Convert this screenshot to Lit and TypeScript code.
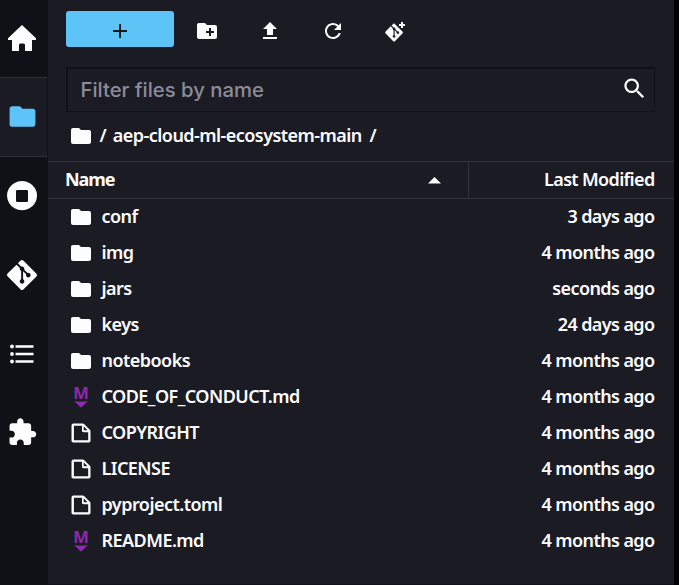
import { LitElement, html, css, svg } from "lit";
import { customElement } from "lit/decorators.js";
import { classMap } from "lit/directives/class-map.js";

const gitPath =
  "M23.546 10.93L13.067.452c-.604-.603-1.582-.603-2.188 0L8.708 2.627l2.76 2.76c.645-.215 1.379-.07 1.889.441.516.515.658 1.258.438 1.9l2.658 2.66c.645-.223 1.387-.078 1.9.435.721.72.721 1.884 0 2.604-.719.719-1.881.719-2.6 0-.539-.541-.674-1.337-.404-1.996L12.86 8.955v6.525c.176.086.342.203.488.348.713.721.713 1.883 0 2.6-.719.721-1.889.721-2.609 0-.719-.719-.719-1.879 0-2.598.182-.18.387-.316.605-.406V8.835c-.217-.091-.424-.222-.6-.401-.545-.545-.676-1.342-.396-2.009L7.636 3.7.45 10.881c-.6.605-.6 1.584 0 2.189l10.48 10.477c.604.604 1.582.604 2.186 0l10.43-10.43c.605-.603.605-1.582 0-2.187";
const folderPath =
  "M10 4H4c-1.1 0-1.99.9-1.99 2L2 18c0 1.1.9 2 2 2h16c1.1 0 2-.9 2-2V8c0-1.1-.9-2-2-2h-8l-2-2z";

const icon = (size: number, body: unknown, box = "0 0 24 24") =>
  html`<svg width=${size} height=${size} viewBox=${box}>${body}</svg>`;

const folder = (size = 24) => icon(size, svg`<path d=${folderPath} />`);
const file = () =>
  icon(
    24,
    svg`<path d="M19.3 8.2l-5.5-5.5c-.3-.3-.7-.5-1.2-.5H3.9c-.8.1-1.6.9-1.6 1.8v14.1c0 .9.7 1.6 1.6 1.6h14.2c.9 0 1.6-.7 1.6-1.6V9.4c.1-.5-.1-.9-.4-1.2zm-5.8-3.3l3.4 3.6h-3.4V4.9zm3.9 12.7H4.7c-.1 0-.2 0-.2-.2V4.7c0-.2.1-.3.2-.3h7.2v4.4s0 .8.3 1.1c.3.3 1.1.3 1.1.3h4.3v7.2s-.1.2-.2.2z" />`,
    "0 0 22 22",
  );
const markdown = () =>
  html`<svg class="md" width="24" height="24" viewBox="0 0 24 24">
    <text x="12" y="13.800" text-anchor="middle">M</text>
    <path d="M5.500 16.400h13l-6.500 6.400z" />
  </svg>`;

const kinds = { folder, file, markdown };
type Kind = keyof typeof kinds;

const entries: { kind: Kind; name: string; modified: string }[] = [
  { kind: "folder", name: "conf", modified: "3 days ago" },
  { kind: "folder", name: "img", modified: "4 months ago" },
  { kind: "folder", name: "jars", modified: "seconds ago" },
  { kind: "folder", name: "keys", modified: "24 days ago" },
  { kind: "folder", name: "notebooks", modified: "4 months ago" },
  { kind: "markdown", name: "CODE_OF_CONDUCT.md", modified: "4 months ago" },
  { kind: "file", name: "COPYRIGHT", modified: "4 months ago" },
  { kind: "file", name: "LICENSE", modified: "4 months ago" },
  { kind: "file", name: "pyproject.toml", modified: "4 months ago" },
  { kind: "markdown", name: "README.md", modified: "4 months ago" },
];

const tabs = [
  icon(30, svg`<path d="M15 2L1 15.200V17h4v11h7v-6q0-1.500 1.500-1.500h3q1.500 0 1.500 1.500v6h7V17h4v-1.800z" />`, "0 0 30 30"),
  folder(31),
  icon(30, svg`<path fill-rule="evenodd" d="M15 0a15 14.600 0 1 0 .01 0zM10.300 9h9.400q1.300 0 1.300 1.300v9.400q0 1.300-1.300 1.300h-9.400Q9 21 9 19.700v-9.400Q9 9 10.300 9z" />`, "0 0 30 30"),
  icon(30, svg`<path d=${gitPath} />`),
  icon(30, svg`<path d="M8.500 6.300h18v2.400h-18zM8.500 13.800h18v2.400h-18zM8.500 21.300h18v2.400h-18z" /><circle cx="5" cy="7.500" r="1.900" /><circle cx="5" cy="15" r="1.900" /><circle cx="5" cy="22.500" r="1.900" />`, "0 0 30 30"),
  icon(30.5, svg`<path d="M20.500 11H19V7c0-1.100-.900-2-2-2h-4V3.500C13 2.120 11.880 1 10.500 1S8 2.120 8 3.500V5H4c-1.100 0-1.990.900-1.990 2v3.800H3.500c1.490 0 2.700 1.210 2.700 2.700s-1.210 2.700-2.700 2.700H2V20c0 1.100.900 2 2 2h3.800v-1.500c0-1.490 1.210-2.700 2.700-2.700 1.490 0 2.700 1.210 2.700 2.700V22H17c1.100 0 2-.900 2-2v-4h1.500c1.380 0 2.500-1.120 2.500-2.500S21.880 11 20.500 11z" />`),
];

const tools = [
  icon(24, svg`<path d="M20 6h-8l-2-2H4c-1.110 0-1.990.890-1.990 2L2 18c0 1.110.890 2 2 2h16c1.110 0 2-.890 2-2V8c0-1.110-.890-2-2-2zm-1 8h-3v3h-2v-3h-3v-2h3V9h2v3h3v2z" />`),
  icon(24, svg`<path d="M9 16h6v-6h4l-7-7-7 7h4zm-4 2h14v2H5z" />`),
  icon(24, svg`<path d="M17.650 6.350C16.200 4.900 14.210 4 12 4c-4.420 0-7.990 3.580-7.990 8s3.570 8 7.990 8c3.730 0 6.840-2.550 7.730-6h-2.080c-.820 2.330-3.040 4-5.650 4-3.310 0-6-2.690-6-6s2.690-6 6-6c1.660 0 3.140.690 4.220 1.780L13 11h7V4l-2.350 2.350z" />`),
  icon(24, svg`<g transform="translate(1.100 4.600) scale(.745)"><path d=${gitPath} /></g><path d="M17 3h2v2h2v2h-2v2h-2V7h-2V5h2z" />`),
];

@customElement("app-root")
export class AppRoot extends LitElement {
  static styles = css`
    :host {
      display: flex;
      box-sizing: border-box;
      width: 679px;
      height: 585px;
      overflow: hidden;
      background: #000;
      color: #fdfdff;
      font: 600 18px/34px "Noto Sans", sans-serif;
      letter-spacing: -0.54px;
    }
    svg { display: block; fill: currentColor; flex: none; }
    .rail { width: 48px; background: #101116; }
    .tab {
      box-sizing: border-box;
      display: flex;
      align-items: center;
      justify-content: center;
      width: 47px;
      height: 79px;
      padding-right: 3px;
    }
    .tab:first-child { height: 77px; padding-bottom: 2px; }
    .tab.active {
      height: 80px;
      margin-bottom: -1px;
      padding: 0 3px 2px 0;
      color: #5cc4f6;
      background: #1b1b23;
      border: solid #303138;
      border-width: 1px 0;
    }
    .panel {
      box-sizing: border-box;
      display: flex;
      flex-direction: column;
      width: 626px;
      background: #1b1b23;
      border-bottom: 1px solid #121218;
    }
    .toolbar { display: flex; align-items: center; height: 36px; margin: 11px 18px 0; }
    .new {
      box-sizing: border-box;
      display: flex;
      align-items: center;
      justify-content: center;
      width: 108px;
      height: 36px;
      margin-right: 21px;
      padding-top: 4px;
      border-radius: 3px;
      color: #17181f;
      background: #5cc4f6;
    }
    .tool { width: 24px; margin-right: 39px; padding-top: 4px; }
    .filter {
      box-sizing: border-box;
      display: flex;
      align-items: center;
      justify-content: space-between;
      height: 45px;
      margin: 20px 19px 0 18px;
      padding: 0 6px 0 12.5px;
      border: 1px solid #101116;
      border-width: 2px 1px 1px 2px;
      color: #8c8b9c;
      font: 450 20.3px/40px Inter, sans-serif;
      letter-spacing: 0;
    }
    .filter svg { margin-bottom: 4px; color: #fdfdff; }
    .crumbs { display: flex; align-items: center; height: 47px; padding: 0 0 2px 21px; }
    .crumbs span { margin-left: 6.6px; padding-bottom: 1px; }
    .crumbs span:last-child { margin-left: 7.6px; }
    .header {
      box-sizing: border-box;
      display: flex;
      height: 38px;
      border: solid #33343c;
      border-width: 1px 0;
      letter-spacing: -0.66px;
    }
    .name-head {
      box-sizing: border-box;
      display: flex;
      align-items: center;
      justify-content: space-between;
      width: 421px;
      padding: 0 27px 0 17px;
      border-right: 1px solid #33343c;
      font-weight: 700;
    }
    .name-head span { padding-bottom: 2px; letter-spacing: -1.1px; }
    .date-head { flex: 1; padding-right: 19.5px; text-align: right; }
    .row { display: flex; align-items: center; height: 36px; padding: 0 19.5px 0 21px; }
    .row span { padding-bottom: 2px; }
    .row .name { flex: 1; margin-left: 8.5px; }
    .row .date { letter-spacing: -0.6px; }
    .md { overflow: visible; color: #8e2aab; }
    .md text { font: 700 16.5px/1 "Open Sans", sans-serif; letter-spacing: 0; }
  `;

  render() {
    return html`
      <nav class="rail">
        ${tabs.map((t, i) => html`<div class=${classMap({ tab: true, active: i === 1 })}>${t}</div>`)}
      </nav>
      <main class="panel">
        <div class="toolbar">
          <div class="new">${icon(24, svg`<path d="M11 5h2v6h6v2h-6v6h-2v-6H5v-2h6z" />`)}</div>
          ${tools.map((t) => html`<div class="tool">${t}</div>`)}
        </div>
        <div class="filter">
          <span>Filter files by name</span>
          ${icon(27, svg`<path d="M15.500 14h-.790l-.280-.270C15.410 12.590 16 11.110 16 9.500 16 5.910 13.090 3 9.500 3S3 5.910 3 9.500 5.910 16 9.500 16c1.610 0 3.090-.590 4.230-1.570l.270.280v.790l5 4.990L20.490 19l-4.990-5zm-6 0C7.010 14 5 11.990 5 9.500S7.010 5 9.500 5 14 7.010 14 9.500 11.990 14 9.500 14z" />`)}
        </div>
        <div class="crumbs">${folder()}<span>/</span><span>aep-cloud-ml-ecosystem-main</span><span>/</span></div>
        <div class="header">
          <div class="name-head"><span>Name</span><svg width="13" height="7" viewBox="0 0 13 7"><path d="M0 6.500L6.500 0 13 6.500z" /></svg></div>
          <div class="date-head">Last Modified</div>
        </div>
        ${entries.map(
          (e) => html`<div class="row">${kinds[e.kind]()}<span class="name">${e.name}</span><span class="date">${e.modified}</span></div>`,
        )}
      </main>
    `;
  }
}
